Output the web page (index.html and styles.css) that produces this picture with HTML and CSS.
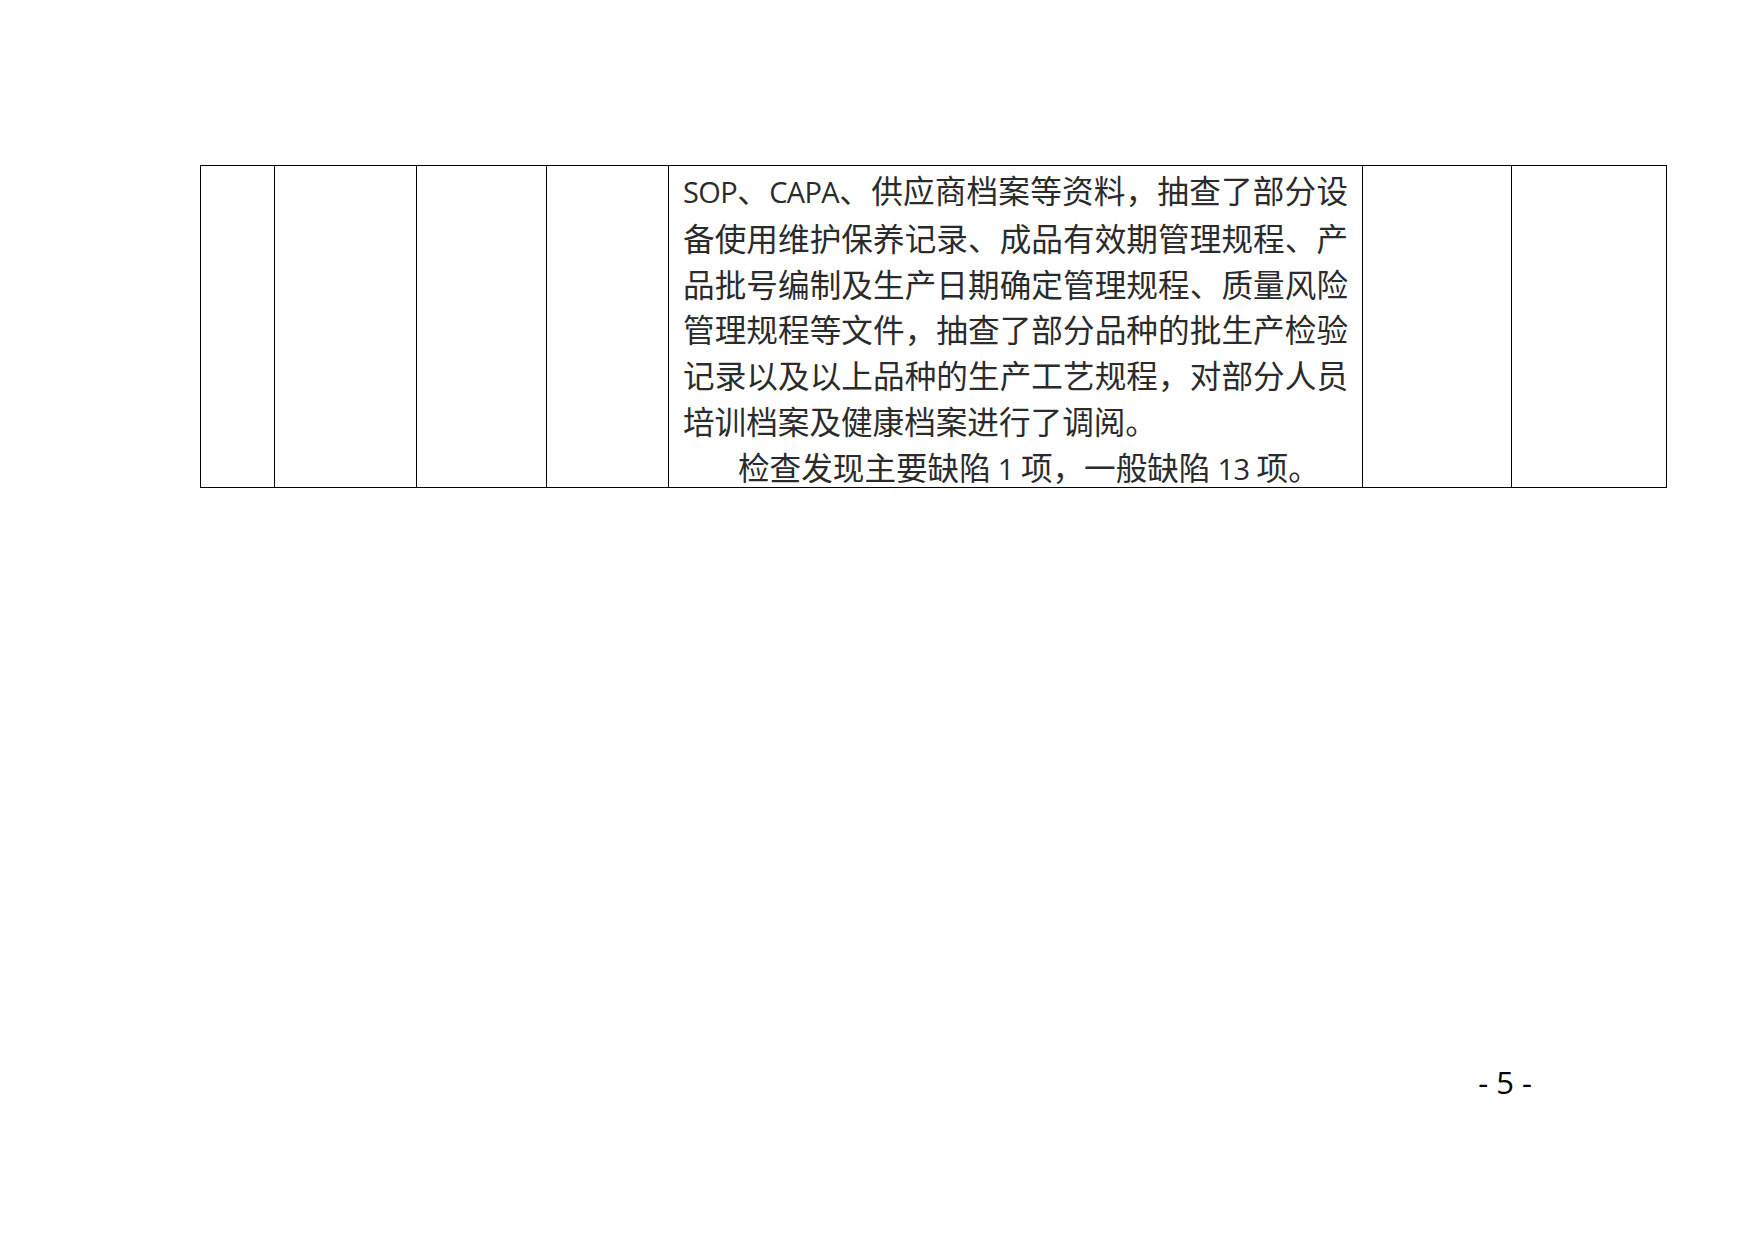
FILE: index.html
```html
<!DOCTYPE html>
<html lang="zh-CN">
<head>
<meta charset="utf-8">
<title>检查记录</title>
<link rel="stylesheet" href="styles.css">
</head>
<body>
<div class="page">
  <table class="record">
    <colgroup>
      <col class="c1"><col class="c2"><col class="c3"><col class="c4"><col class="c5"><col class="c6"><col class="c7">
    </colgroup>
    <tr>
      <td></td>
      <td></td>
      <td></td>
      <td></td>
      <td class="content">
        <div class="clip">
          <div class="line"><span class="lat">SOP</span>、<span class="lat">CAPA</span>、供应商档案等资料，抽查了部分设</div>
          <div class="line">备使用维护保养记录、成品有效期管理规程、产</div>
          <div class="line">品批号编制及生产日期确定管理规程、质量风险</div>
          <div class="line">管理规程等文件，抽查了部分品种的批生产检验</div>
          <div class="line">记录以及以上品种的生产工艺规程，对部分人员</div>
          <div class="line last">培训档案及健康档案进行了调阅。</div>
          <div class="line last indent">检查发现主要缺陷 <span class="lat">1</span> 项，一般缺陷 <span class="lat">13</span> 项。</div>
        </div>
      </td>
      <td></td>
      <td></td>
    </tr>
  </table>
  <div class="footer"><span class="pageno">- 5 -</span></div>
</div>
</body>
</html>
```
FILE: styles.css
```css
html, body {
  margin: 0;
  padding: 0;
  background: #ffffff;
}
.page {
  width: 1754px;
  height: 1241px;
  box-sizing: border-box;
  padding: 165px 0 0 200px;
  font-family: "Noto Sans CJK SC", "Noto Sans", sans-serif;
  color: #2b2b2b;
}
.record {
  border-collapse: collapse;
  table-layout: fixed;
  width: 1467px;
}
.record td {
  border: 1.3px solid #000;
  padding: 0;
  height: 321px;
  vertical-align: top;
}
.c1 { width: 74px; }
.c2 { width: 142px; }
.c3 { width: 130px; }
.c4 { width: 122px; }
.c5 { width: 694px; }
.c6 { width: 149px; }
.c7 { width: 155px; }
.content .clip {
  height: 321px;
  box-sizing: border-box;
  padding: 1px 14px 0 14px;
}
.line {
  font-size: 31.6px;
  line-height: 45.8px;
  white-space: nowrap;
  text-align: justify;
  text-align-last: justify;
}
.line.last {
  text-align-last: left;
}
.indent {
  text-indent: 55px;
}
.lat {
  font-family: "Open Sans", "Noto Sans", sans-serif;
  font-weight: 400;
  font-size: 29px;
  letter-spacing: -0.6px;
}
.footer {
  display: flex;
  justify-content: flex-end;
  padding: 574px 222px 0 0;
}
.pageno {
  font-family: "Open Sans", "Noto Sans", sans-serif;
  font-size: 31px;
  line-height: 40px;
  color: #000;
}
```
